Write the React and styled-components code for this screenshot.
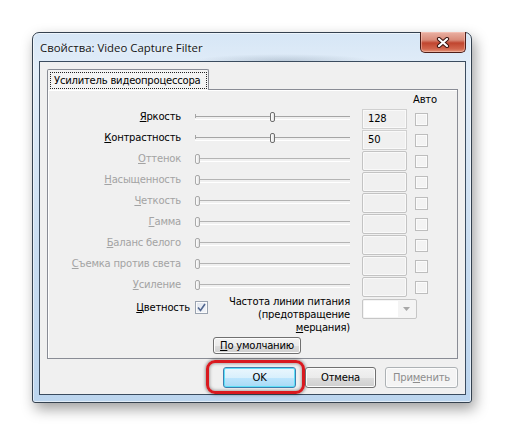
import React from 'react'
import styled, { createGlobalStyle } from 'styled-components'

const GlobalStyle = createGlobalStyle`
	html, body {
		margin: 0;
		padding: 0;
		background: #ffffff;
	}
	body {
		font-family: "DejaVu Sans", "Liberation Sans", sans-serif;
		font-size: 10px;
		letter-spacing: -0.2px;
		color: #000;
	}
`

// страница, окно ставится потоком
const Page = styled.div`
	width: 505px;
	height: 436px;
	box-sizing: border-box;
	padding: 32px 0 0 32px;
	background: #ffffff;
`

const Window = styled.div`
	position: relative;
	width: 440px;
	height: 371px;
	box-sizing: border-box;
	display: flex;
	flex-direction: column;
	padding: 0 5px 7px 6px;
	border: 1px solid #34414f;
	border-radius: 7px 7px 3px 3px;
	background:
		radial-gradient(ellipse 90px 7px at 250px 28px, rgba(120, 140, 160, 0.35), transparent),
		linear-gradient(180deg, #d6e6f6 0%, #e2edf8 10%, #c9ddf1 60%, #bcd5ee 100%);
	box-shadow:
		inset 0 0 0 1px rgba(255, 255, 255, 0.55),
		3px 6px 14px rgba(0, 0, 0, 0.38);
`

const TitleBar = styled.div`
	height: 28px;
	display: flex;
	justify-content: space-between;
	align-items: flex-start;
`

const Title = styled.span`
	align-self: center;
	padding-left: 1px;
	font-family: "Open Sans", "Noto Sans", sans-serif;
	font-size: 11.4px;
	letter-spacing: 0;
	color: #151515;
	text-shadow: 0 0 6px rgba(255, 255, 255, 0.9);
`

const CloseButton = styled.div`
	width: 46px;
	height: 21px;
	margin-top: -1px;
	box-sizing: border-box;
	display: flex;
	align-items: center;
	justify-content: center;
	border: 1px solid #4e1e19;
	border-top: none;
	border-radius: 0 0 5px 5px;
	background: linear-gradient(180deg, #eab1a4 0%, #d98b79 40%, #c0452f 55%, #d2664e 85%, #e49a7e 100%);
	box-shadow: inset 0 0 0 1px rgba(255, 210, 200, 0.45);
`

const Client = styled.div`
	flex: 1;
	display: flex;
	flex-direction: column;
	padding: 7px 7px 6px 7px;
	border: 1px solid #3b4c5f;
	background: #f0f0f0;
`

const TabStrip = styled.div`
	display: flex;
	position: relative;
	z-index: 1;
	margin-bottom: -1px;
`

const Tab = styled.div`
	padding: 2px 1px 1px 2px;
	border: 1px solid #898c95;
	border-bottom: none;
	border-radius: 2px 2px 0 0;
	background: #f3f3f3;
`

const FocusBox = styled.div`
	height: 15px;
	line-height: 15px;
	padding: 0 5px 0 3px;
	border: 1px dotted #222;
`

const TabPanel = styled.div`
	height: 270px;
	box-sizing: border-box;
	display: flex;
	flex-direction: column;
	border: 1px solid #898c95;
	background: #f0f0f0;
	box-shadow: inset 1px 1px 0 #ffffff;
`

const HeaderRow = styled.div`
	height: 19px;
	display: flex;
	align-items: center;
	padding-left: 365px;
`

const Rows = styled.div`
	display: flex;
	flex-direction: column;
	gap: 1px;
`

const Row = styled.div`
	height: 20px;
	display: flex;
	align-items: center;
`

const Label = styled.span`
	width: 133px;
	margin-bottom: 5px;
	text-align: right;
	white-space: nowrap;
	color: ${p => (p.$disabled ? '#a3a3a3' : '#000')};
`

const SliderCell = styled.div`
	position: relative;
	width: 155px;
	height: 12px;
	margin: 0 0 2px 14px;
`

const Track = styled.div`
	position: absolute;
	left: 0;
	right: 0;
	top: 4px;
	height: 2px;
	border-top: 1px solid ${p => (p.$disabled ? '#b4b4b4' : '#a5a5a5')};
	border-bottom: 1px solid #ffffff;
	&::before {
		content: '';
		position: absolute;
		left: 0;
		top: -3px;
		width: 1px;
		height: 4px;
		background: ${p => (p.$disabled ? '#c0c0c0' : '#a5a5a5')};
	}
`

const Thumb = styled.div`
	position: absolute;
	top: 0;
	width: 5px;
	height: 10px;
	box-sizing: border-box;
	border: 1px solid ${p => (p.$disabled ? '#a9a9a9' : '#6f6f6f')};
	border-radius: 2px;
	background: linear-gradient(90deg, #ffffff, #e3e3e3);
`

const ValueBox = styled.div`
	width: 45px;
	height: 20px;
	margin-left: 12px;
	box-sizing: border-box;
	padding-left: 5px;
	line-height: 18px;
	border: 1px solid ${p => (p.$disabled ? '#c3c3c3' : '#d0d0d0')};
	border-radius: ${p => (p.$disabled ? '2px' : '0')};
	background: #f0f0f0;
	box-shadow: inset 0 0 0 1px #f9f9f9;
`

const CheckBox = styled.div`
	width: 13px;
	height: 13px;
	margin-left: 8px;
	box-sizing: border-box;
	display: flex;
	align-items: center;
	justify-content: center;
	border: 1px solid ${p => (p.$checked ? '#9aa3b0' : '#bdbdbd')};
	background: ${p => (p.$checked ? 'linear-gradient(135deg, #dfe5ee, #f4f6fa)' : '#f3f3f3')};
	box-shadow: inset 0 0 0 1px #fbfbfb;
`

const ColorRow = styled.div`
	display: flex;
	align-items: flex-start;
	margin-top: -2px;
`

const ColorGroup = styled.div`
	width: 160px;
	margin-top: 6px;
	display: flex;
	align-items: center;
	justify-content: flex-end;
	& > span {
		margin-right: 5px;
	}
	& > div {
		margin-left: 0;
	}
`

const FreqLabel = styled.div`
	width: 142px;
	text-align: right;
	line-height: 13px;
`

const Combo = styled.div`
	width: 55px;
	height: 20px;
	margin: 4px 0 0 12px;
	box-sizing: border-box;
	display: flex;
	align-items: center;
	padding: 1px;
	border: 1px solid #c6c6c6;
	border-radius: 2px;
	background: #f4f4f4;
`

const ComboField = styled.div`
	width: 34px;
	height: 100%;
	background: #ffffff;
`

const ComboArrow = styled.div`
	flex: 1;
	display: flex;
	justify-content: center;
`

const DefaultsRow = styled.div`
	padding-left: 165px;
	margin-top: 3px;
`

const Button = styled.button`
	position: relative;
	width: ${p => p.$w || 73}px;
	height: ${p => p.$h || 21}px;
	padding: 0;
	font-family: "DejaVu Sans", "Liberation Sans", sans-serif;
	font-size: 10px;
	letter-spacing: -0.2px;
	color: ${p => (p.$disabled ? '#8d8d8d' : '#000')};
	border: 1px solid ${p => (p.$primary ? '#3c7fb1' : p.$disabled ? '#adb2b5' : '#707070')};
	border-radius: 3px;
	background: ${p =>
		p.$primary
			? 'linear-gradient(180deg, #eaf6fd 0%, #d9f0fc 50%, #bee6fd 50%, #a7d9f5 100%)'
			: p.$disabled
			? '#f4f4f4'
			: 'linear-gradient(180deg, #f2f2f2 0%, #ebebeb 50%, #dddddd 50%, #cfcfcf 100%)'};
	box-shadow: ${p => (p.$primary ? 'inset 0 0 0 1px #5ee0f7' : 'inset 0 0 0 1px #fcfcfc')};
`

const ButtonBar = styled.div`
	display: flex;
	justify-content: flex-end;
	gap: 9px;
	margin-top: 8px;
`

// красная рамка-выделение вокруг кнопки ОК
const Highlight = styled.div`
	position: absolute;
	left: -18px;
	right: -10px;
	top: -8px;
	bottom: -7px;
	border: 3px solid #d9191f;
	border-radius: 9px;
	box-shadow: 0 0 3px 1px rgba(0, 0, 0, 0.35), inset 0 0 3px 1px rgba(0, 0, 0, 0.3);
	pointer-events: none;
`

const sliders = [
	{ key: 'Я', rest: 'ркость', value: 128, pos: 0.5 },
	{ key: 'К', rest: 'онтрастность', value: 50, pos: 0.5 },
	{ key: 'О', rest: 'ттенок', disabled: true },
	{ key: 'Н', rest: 'асыщенность', disabled: true },
	{ key: 'Ч', rest: 'еткость', disabled: true },
	{ key: 'Г', rest: 'амма', disabled: true },
	{ key: 'Б', rest: 'аланс белого', disabled: true },
	{ key: 'С', rest: 'ъемка против света', disabled: true },
	{ key: 'У', rest: 'силение', disabled: true },
]

const CloseGlyph = () => (
	<svg width="14" height="11" viewBox="0 0 14 11">
		<path d="M3 2 L11 9 M11 2 L3 9" stroke="#3a1410" strokeWidth="4.2" strokeLinecap="round" />
		<path d="M3 2 L11 9 M11 2 L3 9" stroke="#ffffff" strokeWidth="2.2" strokeLinecap="round" />
	</svg>
)

const CheckGlyph = () => (
	<svg width="9" height="9" viewBox="0 0 9 9">
		<path d="M1 4.5 L3.5 7.5 L8 1" fill="none" stroke="#51668f" strokeWidth="1.6" />
	</svg>
)

const ArrowGlyph = () => (
	<svg width="7" height="4" viewBox="0 0 7 4">
		<path d="M0 0 H7 L3.5 4 Z" fill="#a8a8a8" />
	</svg>
)

export default function App() {
	return (
		<>
			<GlobalStyle />
			<Page>
				<Window>
					<TitleBar>
						<Title>Свойства: Video Capture Filter</Title>
						<CloseButton><CloseGlyph /></CloseButton>
					</TitleBar>
					<Client>
						<TabStrip>
							<Tab>
								<FocusBox>Усилитель видеопроцессора</FocusBox>
							</Tab>
						</TabStrip>
						<TabPanel>
							<HeaderRow>Авто</HeaderRow>
							<Rows>
								{sliders.map(s => (
									<Row key={s.key}>
										<Label $disabled={s.disabled}><u>{s.key}</u>{s.rest}</Label>
										<SliderCell>
											<Track $disabled={s.disabled} />
											<Thumb
												$disabled={s.disabled}
												style={{ left: ((s.pos || 0) * 150) + 'px' }}
											/>
										</SliderCell>
										<ValueBox $disabled={s.disabled}>{s.value}</ValueBox>
										<CheckBox />
									</Row>
								))}
							</Rows>
							<ColorRow>
								<ColorGroup>
									<span><u>Ц</u>ветность</span>
									<CheckBox $checked><CheckGlyph /></CheckBox>
								</ColorGroup>
								<FreqLabel>
									Частота линии питания<br />
									(предотвращение<br />
									<u>м</u>ерцания)
								</FreqLabel>
								<Combo>
									<ComboField />
									<ComboArrow><ArrowGlyph /></ComboArrow>
								</Combo>
							</ColorRow>
							<DefaultsRow>
								<Button $w={88} $h={17}><u>П</u>о умолчанию</Button>
							</DefaultsRow>
						</TabPanel>
						<ButtonBar>
							<Button $primary>
								OK
								<Highlight />
							</Button>
							<Button $w={71}>Отмена</Button>
							<Button $disabled>При<u>м</u>енить</Button>
						</ButtonBar>
					</Client>
				</Window>
			</Page>
		</>
	)
}
